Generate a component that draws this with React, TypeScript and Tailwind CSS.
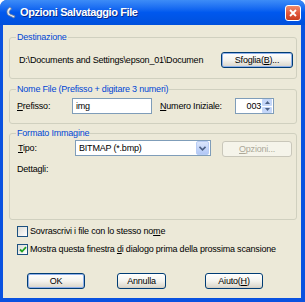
import type { ReactNode } from 'react';

const FONT = "font-['Liberation_Sans','DejaVu_Sans',Arial,sans-serif]";

function U({ children }: { children: ReactNode }) {
  return <span className="underline underline-offset-[1px]">{children}</span>;
}

function XpButton({
  children,
  className,
  isDefault,
  disabled,
}: {
  children: ReactNode;
  className: string;
  isDefault?: boolean;
  disabled?: boolean;
}) {
  if (disabled) {
    return (
      <button
        className={`flex h-[16px] items-center justify-center rounded-[3px] border border-[#c9c7ba] bg-[#f5f4ea] text-[#aca899] ${className}`}
      >
        {children}
      </button>
    );
  }
  return (
    <button
      className={`flex h-[16px] items-center justify-center rounded-[3px] border border-[#003c74] bg-linear-to-b from-[#ffffff] via-[#f4f3ee] to-[#d8d4c8] text-black ${
        isDefault ? 'shadow-[inset_0_0_0_1px_#8fb0ea]' : 'shadow-[inset_0_-1px_0_#d6d0c5]'
      } ${className}`}
    >
      {children}
    </button>
  );
}

function Checkbox({ checked }: { checked?: boolean }) {
  return (
    <div className="flex h-[11px] w-[11px] shrink-0 items-center justify-center border border-[#1c5180] bg-linear-to-br from-[#dcdcd7] to-[#ffffff]">
      {checked && (
        <svg width="8" height="7" viewBox="0 0 8 7">
          <path d="M1 3.5 L3 5.5 L7 1.2" fill="none" stroke="#21a121" strokeWidth="1.8" />
        </svg>
      )}
    </div>
  );
}

export default function App() {
  return (
    <div className={`h-[302px] w-[305px] bg-white text-[9px] leading-[11px] tracking-[-0.2px] text-black ${FONT}`}>
      <div className="flex h-full w-full flex-col rounded-t-[7px] bg-[#0a52e0]">
        {/* title bar */}
        <div className="flex h-[25px] shrink-0 items-center rounded-t-[7px] bg-linear-to-b from-[#3d8cf7] via-[#0058ee] to-[#0050dc] pl-[4px] pr-[4px]">
          <svg width="13" height="13" viewBox="0 0 13 13" className="shrink-0">
            <path
              d="M6 1 C3 3 2 6 4 9 L10 12 L11 10 L6 8 C4.5 6.5 5 4.5 7.5 3 Z"
              fill="#e8ecf4"
              stroke="#6b7c99"
              strokeWidth="0.8"
            />
          </svg>
          <span className="ml-[3px] flex-1 text-[11px] font-bold tracking-[-0.4px] text-white [text-shadow:1px_1px_0_#0a2d8c]">
            Opzioni Salvataggio File
          </span>
          <div className="flex h-[16px] w-[16px] items-center justify-center rounded-[3px] border border-white bg-linear-to-b from-[#f08b6c] via-[#e2583e] to-[#c93d1e]">
            <svg width="8" height="8" viewBox="0 0 8 8">
              <path d="M1 1 L7 7 M7 1 L1 7" stroke="white" strokeWidth="1.8" />
            </svg>
          </div>
        </div>

        {/* client area */}
        <div className="mb-[4px] ml-[3px] mr-[4px] flex flex-1 flex-col bg-[#ece9d8] pl-[6px]">
          {/* Destinazione */}
          <fieldset className="mt-[7px] w-[288px] rounded-[3px] border border-[#d0d0bf]">
            <legend className="ml-[6px] px-[1px] text-[#0046d5]">Destinazione</legend>
            <div className="flex items-center pb-[10px] pl-[9px] pr-[3px] pt-[9px]">
              <span className="flex-1 whitespace-nowrap">D:\Documents and Settings\epson_01\Documen</span>
              <XpButton className="w-[72px]" isDefault>
                Sfoglia(<U>B</U>)...
              </XpButton>
            </div>
          </fieldset>

          {/* Nome File */}
          <fieldset className="mt-[5px] w-[288px] rounded-[3px] border border-[#d0d0bf]">
            <legend className="ml-[6px] px-[1px] text-[#0046d5]">Nome File (Prefisso + digitare 3 numeri)</legend>
            <div className="flex h-[16px] items-center box-content pb-[9px] pl-[7px] pt-[3px]">
              <span className="w-[55px]">
                <U>P</U>refisso:
              </span>
              <div className="flex h-[16px] w-[80px] items-center border border-[#7f9db9] bg-white pl-[3px]">img</div>
              <span className="ml-[8px] w-[75px]">
                <U>N</U>umero Iniziale:
              </span>
              <div className="flex h-[16px] w-[39px] items-center border border-[#7f9db9] bg-white">
                <span className="flex-1 pr-[1px] text-right">003</span>
                <div className="mr-[1px] flex h-[14px] w-[10px] flex-col gap-px">
                  <div className="flex flex-1 items-center justify-center rounded-[1px] bg-[#c4d6f8]">
                    <svg width="5" height="3" viewBox="0 0 5 3">
                      <path d="M0 3 L2.5 0 L5 3 Z" fill="#4d6185" />
                    </svg>
                  </div>
                  <div className="flex flex-1 items-center justify-center rounded-[1px] bg-[#c4d6f8]">
                    <svg width="5" height="3" viewBox="0 0 5 3">
                      <path d="M0 0 L2.5 3 L5 0 Z" fill="#4d6185" />
                    </svg>
                  </div>
                </div>
              </div>
            </div>
          </fieldset>

          {/* Formato Immagine */}
          <fieldset className="mt-[4px] h-[92px] w-[288px] rounded-[3px] border border-[#d0d0bf]">
            <legend className="ml-[6px] px-[1px] text-[#0046d5]">Formato Immagine</legend>
            <div className="flex items-start pl-[8px] pt-[1px]">
              <span className="mt-[3px] w-[57px]">
                <U>T</U>ipo:
              </span>
              <div className="flex h-[16px] w-[136px] items-center border border-[#7f9db9] bg-white pl-[3px]">
                <span className="flex-1">BITMAP (*.bmp)</span>
                <div className="mr-[1px] flex h-[14px] w-[13px] items-center justify-center rounded-[2px] border border-[#b9cdf5] bg-linear-to-b from-[#dbe6fc] to-[#b2c8f6]">
                  <svg width="7" height="5" viewBox="0 0 7 5">
                    <path d="M0.5 0.8 L3.5 3.8 L6.5 0.8" fill="none" stroke="#4d6185" strokeWidth="1.6" />
                  </svg>
                </div>
              </div>
              <XpButton className="ml-[11px] mt-[1px] w-[70px]" disabled>
                <U>O</U>pzioni...
              </XpButton>
            </div>
            <div className="mt-[7px] pl-[7px]">Dettagli:</div>
          </fieldset>

          {/* checkboxes */}
          <div className="mt-[5px] flex h-[13px] items-center pl-[8px]">
            <Checkbox />
            <span className="ml-[2px]">
              Sovrascrivi i file con lo stesso no<U>m</U>e
            </span>
          </div>
          <div className="mt-[5px] flex h-[13px] items-center pl-[8px]">
            <Checkbox checked />
            <span className="ml-[2px]">
              Mostra questa finestra <U>d</U>i dialogo prima della prossima scansione
            </span>
          </div>

          {/* buttons */}
          <div className="mt-[17px] flex items-center pl-[18px]">
            <XpButton className="w-[58px]" isDefault>
              OK
            </XpButton>
            <XpButton className="ml-[32px] w-[49px]">Annulla</XpButton>
            <XpButton className="ml-[39px] w-[58px]">
              Aiuto(<U>H</U>)
            </XpButton>
          </div>
        </div>
      </div>
    </div>
  );
}
